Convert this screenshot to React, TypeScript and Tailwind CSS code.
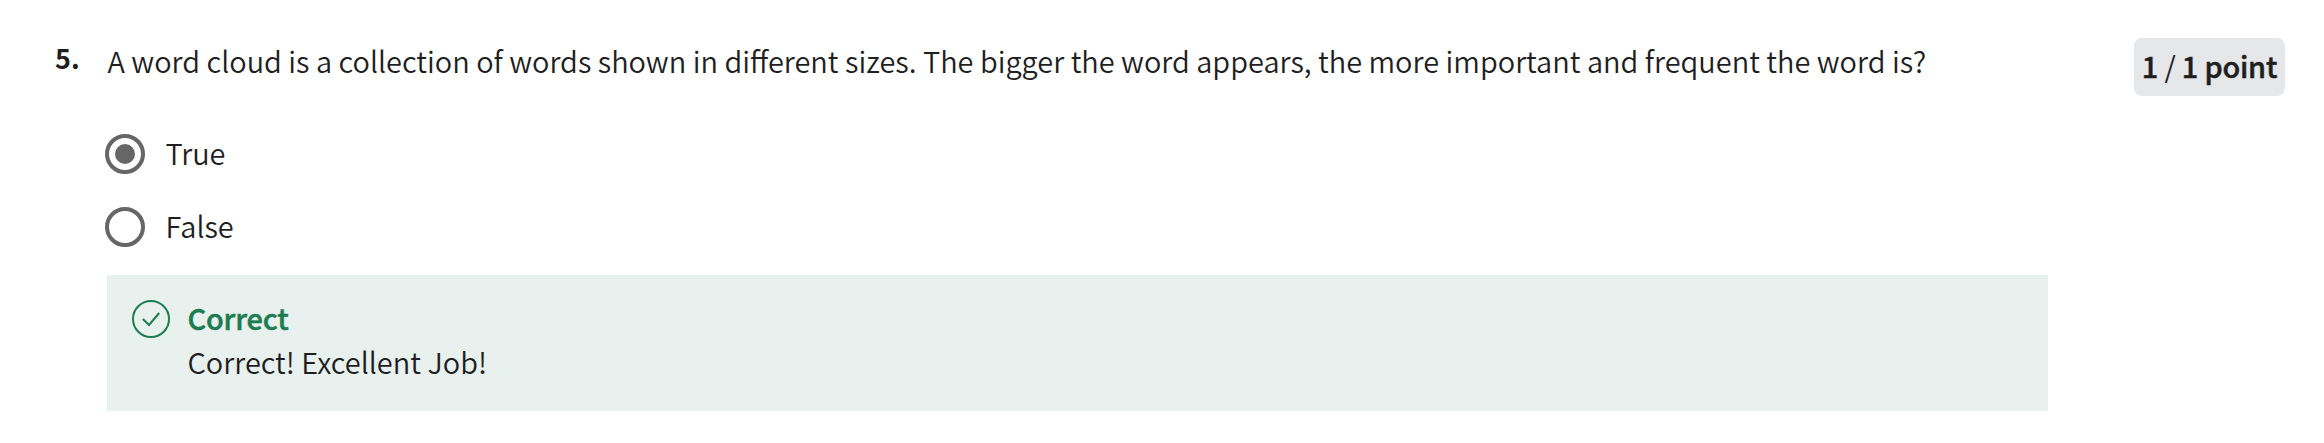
import React from 'react';

function Option({ label, checked }: { label: string; checked: boolean }) {
  return (
    <label className="-ml-[2px] flex h-10 items-center">
      <span
        role="radio"
        aria-checked={checked}
        className="flex size-10 shrink-0 items-center justify-center rounded-full border-4 border-[#666666]"
      >
        {checked && <span className="size-5 rounded-full bg-[#666666]" />}
      </span>
      <span className="-mt-[5px] ml-[20.5px] text-[28.95px] leading-10 font-[350]">{label}</span>
    </label>
  );
}

export default function App() {
  return (
    <main className="h-[443px] w-[2324px] bg-white pt-[38px] pl-[55px] font-['Noto_Sans_CJK_SC','Source_Sans_Pro',sans-serif] text-[#1f1f1f]">
      <div className="flex items-start">
        <div className="w-[52px] text-[27px] leading-10 font-bold">5.</div>
        <div className="w-[1941px]">
          <p className="pt-[2px] pb-[2px] pl-[0.5px] text-[28.95px] leading-10 font-[350] whitespace-nowrap">
            A word cloud is a collection of words shown in different sizes. The bigger the word appears, the more
            important and frequent the word is?
          </p>
          <div role="radiogroup" className="mt-[52px] flex flex-col gap-[33px]">
            <Option label="True" checked />
            <Option label="False" checked={false} />
          </div>
          <section className="mt-7 flex h-[136px] bg-[#e8f1ee] pt-[25px] pl-[25px]">
            <svg className="size-[38px] shrink-0" viewBox="0 0 38 38" fill="none" stroke="#1d7c50" strokeWidth="2">
              <circle cx="19" cy="19" r="18" />
              <path d="M10.9 19 17 25 27.2 13" />
            </svg>
            <div className="ml-[17.5px] text-[28.95px] leading-[44px]">
              <h3 className="-mt-[5px] font-medium tracking-[-0.2px] text-[#1d7c50] [-webkit-text-stroke:0.5px_#1d7c50]">
                Correct
              </h3>
              <p className="font-[350]">Correct! Excellent Job!</p>
            </div>
          </section>
        </div>
        <div className="ml-[86px] flex h-[58px] w-[151px] items-center justify-center rounded-lg bg-[#e5e7e8] pb-[2px] text-[28.9px] font-medium tracking-[-0.2px] whitespace-pre [-webkit-text-stroke:0.5px_#1f1f1f]">
          <span>
            1 <span className="font-normal [-webkit-text-stroke:0]">/</span> 1 point
          </span>
        </div>
      </div>
    </main>
  );
}
